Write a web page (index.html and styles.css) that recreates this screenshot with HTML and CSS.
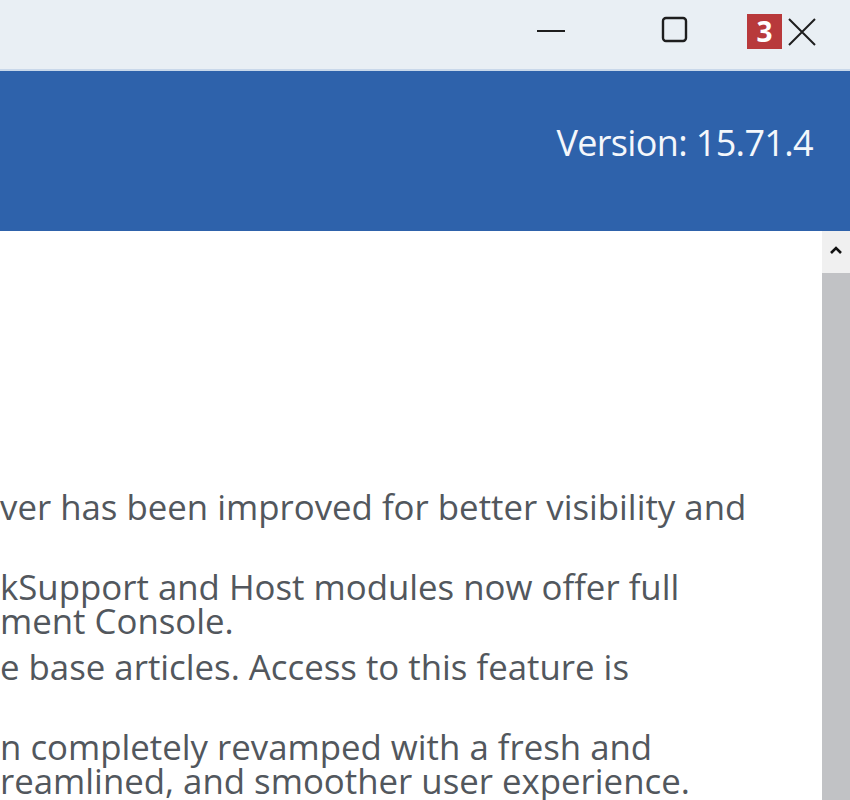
FILE: index.html
```html
<!DOCTYPE html>
<html>
<head>
<meta charset="utf-8">
<link rel="stylesheet" href="styles.css">
</head>
<body>
<div class="window">
  <div class="titlebar">
    <div class="ctl ctl-min">
      <svg width="28" height="4" viewBox="0 0 28 4"><line x1="0" y1="2" x2="28" y2="2" stroke="#1e1e1e" stroke-width="2"/></svg>
    </div>
    <div class="ctl ctl-max">
      <svg width="28" height="28" viewBox="0 0 28 28"><rect x="2" y="2" width="23" height="23" rx="3" ry="3" fill="none" stroke="#1e1e1e" stroke-width="2.4"/></svg>
    </div>
    <div class="ctl ctl-close">
      <span class="badge">3</span>
      <svg width="28" height="28" viewBox="0 0 28 28"><path d="M1 1 L27 27 M27 1 L1 27" stroke="#1e1e1e" stroke-width="2" fill="none"/></svg>
    </div>
  </div>
  <div class="header">
    <div class="version">Version: 15.71.4</div>
  </div>
  <div class="content">
    <div class="main">
      <div class="item">
        <div class="line">ver has been improved for better visibility and</div>
        <div class="line"></div>
      </div>
      <div class="item">
        <div class="line">kSupport and Host modules now offer full</div>
        <div class="line">ment Console.</div>
      </div>
      <div class="item">
        <div class="line">e base articles. Access to this feature is</div>
        <div class="line"></div>
      </div>
      <div class="item">
        <div class="line">n completely revamped with a fresh and</div>
        <div class="line">reamlined, and smoother user experience.</div>
      </div>
    </div>
    <div class="scrollbar">
      <div class="sb-up">
        <svg width="14" height="10" viewBox="0 0 14 10"><path d="M2 8 L7 3 L12 8" stroke="#111" stroke-width="2.6" fill="none"/></svg>
      </div>
      <div class="sb-thumb"></div>
    </div>
  </div>
</div>
</body>
</html>
```
FILE: styles.css
```css
html, body {
  margin: 0;
  padding: 0;
}
body {
  width: 850px;
  height: 800px;
  overflow: hidden;
  background: #ffffff;
  font-family: "Open Sans", "Noto Sans", sans-serif;
}
.window {
  display: flex;
  flex-direction: column;
  height: 800px;
}
.titlebar {
  background: #e9eff4;
  display: flex;
  justify-content: flex-end;
  align-items: flex-start;
  border-bottom: 2px solid #c9d8ea;
  box-sizing: border-box;
  height: 71px;
}
.ctl {
  display: flex;
  align-items: center;
  justify-content: center;
}
.ctl-min {
  width: 28px;
  margin-top: 29px;
  margin-right: 96px;
}
.ctl-max {
  width: 28px;
  margin-top: 16px;
  margin-right: 58px;
}
.ctl-close {
  margin-top: 14px;
  margin-right: 34px;
  align-items: flex-start;
}
.ctl-close svg {
  margin-top: 4px;
  margin-left: 6px;
}
.badge {
  width: 35px;
  height: 35px;
  background: #b8393b;
  color: #ffffff;
  font-family: "Open Sans", sans-serif;
  font-weight: 700;
  font-size: 28px;
  line-height: 35px;
  text-align: center;
}
.header {
  height: 160px;
  background: #2e62ab;
  display: flex;
  justify-content: flex-end;
  align-items: flex-start;
}
.version {
  color: #f4f7fb;
  font-size: 36px;
  line-height: 54px;
  margin-top: 45px;
  margin-right: 37px;
  letter-spacing: -0.65px;
}
.content {
  flex: 1;
  display: flex;
  overflow: hidden;
}
.main {
  flex: 1;
  padding-top: 259px;
  overflow: hidden;
}
.item {
  margin-bottom: 12px;
}
.line {
  height: 34px;
  line-height: 34px;
  font-size: 34.8px;
  color: #52575d;
  white-space: nowrap;
}
.scrollbar {
  width: 28px;
  display: flex;
  flex-direction: column;
  background: #f0f0f0;
}
.sb-up {
  height: 42px;
  display: flex;
  justify-content: center;
  align-items: flex-start;
  padding-top: 14px;
  box-sizing: border-box;
}
.sb-thumb {
  flex: 1;
  background: #c1c2c5;
}
```
